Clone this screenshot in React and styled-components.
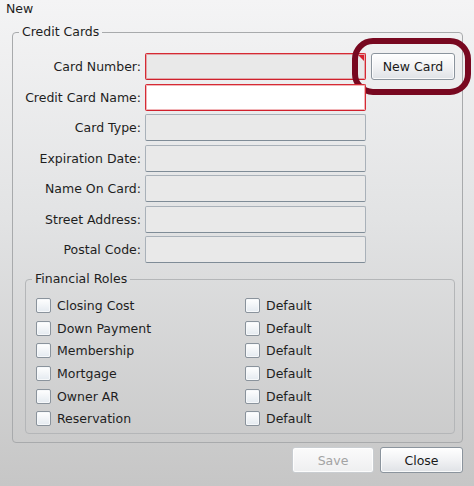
import React from 'react'
import styled, { createGlobalStyle } from 'styled-components'

const GlobalStyle = createGlobalStyle`
  html, body {
    margin: 0;
    padding: 0;
  }
  body {
    font-family: "DejaVu Sans", Verdana, sans-serif;
    font-size: 12.5px;
    color: #1e1e1e;
  }
`

const Window = styled.div`
  width: 474px;
  height: 486px;
  box-sizing: border-box;
  background: linear-gradient(to bottom, #f4f4f5 0%, #e2e3e4 45%, #c6c6c6 100%);
  display: flex;
  flex-direction: column;
  overflow: hidden;
`

const Title = styled.div`
  height: 24px;
  padding: 1px 0 0 6px;
  box-sizing: border-box;
  font-size: 12.5px;
  line-height: 15px;
`

const Group = styled.fieldset`
  margin: ${p => p.$margin || '0'};
  padding: ${p => p.$padding || '0'};
  border: 1px solid ${p => p.$inner ? '#b4b6b8' : '#a8aaac'};
  border-radius: 4px;
  min-width: 0;
`

const Caption = styled.legend`
  margin-left: ${p => p.$offset || '6px'};
  padding: 0 3px;
  font-size: 12.5px;
  line-height: 16px;
`

const FormGrid = styled.div`
  display: grid;
  grid-template-columns: 128px 221px 84px;
  column-gap: 4px;
  row-gap: 3.5px;
  grid-auto-rows: 27px;
  align-items: center;
  margin-top: 13px;
`

const Label = styled.label`
  text-align: right;
  white-space: nowrap;
  grid-column: 1;
`

const FieldWrap = styled.div`
  position: relative;
  grid-column: 2;
  height: 27px;

  ${p => p.$flagged && `
    &::after {
      content: '';
      position: absolute;
      top: 2px;
      right: 2px;
      border-top: 6px solid #d8202c;
      border-left: 6px solid transparent;
    }
  `}
`

const Field = styled.input`
  display: block;
  width: 100%;
  height: 27px;
  box-sizing: border-box;
  margin: 0;
  padding: 0 4px;
  border: 1px solid ${p => p.$invalid ? '#d62a34' : '#a9b1b9'};
  border-bottom-color: ${p => p.$invalid ? '#d0202c' : '#7f8c97'};
  border-radius: 2px;
  background: ${p => p.$blank ? '#ffffff' : '#e9e9e9'};
  box-shadow: ${p => p.$invalid ? 'inset 0 0 0 1px rgba(214, 42, 52, 0.35)' : 'none'};
  font: inherit;
  outline: none;
`

const ButtonCell = styled.div`
  position: relative;
  grid-column: 3;
  margin-left: 1px;
  height: 27px;
`

const Ring = styled.span`
  position: absolute;
  left: -19px;
  right: -17px;
  top: -15px;
  bottom: -15px;
  border: 6px solid #780820;
  border-radius: 21px;
  pointer-events: none;
`

const Button = styled.button`
  width: ${p => p.$width || '84px'};
  height: ${p => p.$height || '27px'};
  box-sizing: border-box;
  margin: 0;
  padding: 0;
  border: 1px solid ${p => p.disabled ? '#c9cdd1' : '#8b949d'};
  border-radius: 3px;
  background: ${p => p.disabled
    ? 'linear-gradient(to bottom, #fbfbfb, #eeeff0)'
    : 'linear-gradient(to bottom, #ffffff 0%, #f1f2f4 50%, #dfe2e6 100%)'};
  box-shadow: inset 0 0 0 1px rgba(255, 255, 255, 0.8);
  color: ${p => p.disabled ? '#a3a3a3' : '#1a1a1a'};
  font: inherit;
  font-size: 12.5px;
`

const RolesGrid = styled.div`
  display: grid;
  grid-template-columns: 209px 1fr;
  grid-auto-rows: 22.7px;
  align-items: center;
  margin-top: 7px;
  padding-left: 10px;
`

const Check = styled.label`
  display: flex;
  align-items: center;
  gap: 6px;
  white-space: nowrap;
`

const Box = styled.span`
  width: 15px;
  height: 15px;
  box-sizing: border-box;
  border: 1px solid #8a939c;
  border-radius: 2px;
  background: linear-gradient(to bottom, #ffffff 0%, #e4eaf0 100%);
  box-shadow: inset 0 0 0 1px #f6f8fa;
  flex: none;
`

const Footer = styled.div`
  display: flex;
  justify-content: flex-end;
  gap: 6px;
  padding: 4px 11px 0 0;
`

const fields = [
  { label: 'Card Number:', invalid: true, flagged: true, button: true },
  { label: 'Credit Card Name:', invalid: true, blank: true },
  { label: 'Card Type:' },
  { label: 'Expiration Date:' },
  { label: 'Name On Card:' },
  { label: 'Street Address:' },
  { label: 'Postal Code:' },
]

const roles = ['Closing Cost', 'Down Payment', 'Membership', 'Mortgage', 'Owner AR', 'Reservation']

const App = () => {
  return (
    <Window>
      <GlobalStyle />
      <Title>New</Title>
      <Group $margin="0 11px 0 12px" $padding="0 0 8px 0">
        <Caption $offset="6px">Credit Cards</Caption>
        <FormGrid>
          {fields.map(f => (
            <React.Fragment key={f.label}>
              <Label>{f.label}</Label>
              <FieldWrap $flagged={f.flagged}>
                <Field readOnly $invalid={f.invalid} $blank={f.blank} />
              </FieldWrap>
              {f.button && (
                <ButtonCell>
                  <Button>New Card</Button>
                  <Ring />
                </ButtonCell>
              )}
            </React.Fragment>
          ))}
        </FormGrid>
        <Group $inner $margin="8px 7px 0 12px" $padding="0 0 3px 0">
          <Caption $offset="6px">Financial Roles</Caption>
          <RolesGrid>
            {roles.map(role => (
              <React.Fragment key={role}>
                <Check><Box />{role}</Check>
                <Check><Box />Default</Check>
              </React.Fragment>
            ))}
          </RolesGrid>
        </Group>
      </Group>
      <Footer>
        <Button disabled $width="82px" $height="26px">Save</Button>
        <Button $width="83px" $height="26px">Close</Button>
      </Footer>
    </Window>
  )
}

export default App
